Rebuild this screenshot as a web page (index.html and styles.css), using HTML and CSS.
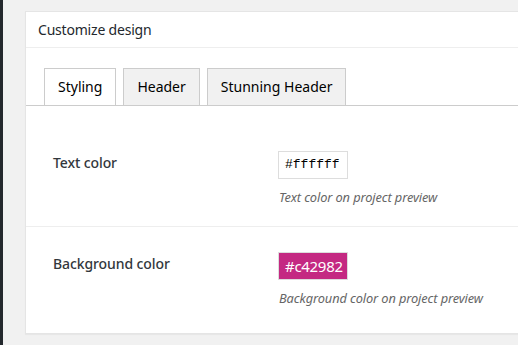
FILE: index.html
```html
<!DOCTYPE html>
<html>
<head>
<meta charset="utf-8">
<link rel="stylesheet" href="styles.css">
</head>
<body>
<div class="sidebar"></div>
<main class="main">
  <section class="card">
    <h2 class="card-title">Customize design</h2>
    <nav class="tabs">
      <span class="tab active">Styling</span>
      <span class="tab">Header</span>
      <span class="tab">Stunning Header</span>
    </nav>
    <div class="form">
      <div class="row">
        <div class="label">Text color</div>
        <div class="field">
          <div class="color-input mono">#ffffff</div>
          <p class="desc">Text color on project preview</p>
        </div>
      </div>
      <div class="row">
        <div class="label">Background color</div>
        <div class="field">
          <div class="color-input filled">#c42982</div>
          <p class="desc">Background color on project preview</p>
        </div>
      </div>
    </div>
  </section>
</main>
</body>
</html>
```
FILE: styles.css
```css
html, body {
  margin: 0;
  padding: 0;
  height: 100%;
  overflow: hidden;
}
body {
  background: #f1f1f1;
  display: flex;
  font-family: "Noto Sans", "Open Sans", sans-serif;
  color: #23282d;
}
.sidebar {
  width: 3px;
  flex: none;
  background: #23282d;
}
.main {
  flex: 1;
  min-width: 0;
  padding: 11px 0 0 22px;
}
.card {
  background: #fff;
  border: 1px solid #e5e5e5;
  border-right: none;
  box-shadow: 0 1px 1px rgba(0,0,0,.04);
}
.card-title {
  margin: 0;
  height: 35px;
  line-height: 35px;
  padding: 0 12px;
  font-size: 14px;
  font-weight: 400;
  letter-spacing: -0.2px;
  border-bottom: 1px solid #eee;
}
.tabs {
  display: flex;
  gap: 7px;
  padding: 20px 0 0 18px;
  border-bottom: 1px solid #ccc;
}
.tab {
  height: 36px;
  line-height: 36px;
  padding: 0 13px;
  font-size: 14px;
  border: 1px solid #ccc;
  border-bottom: none;
  background: #f1f1f1;
  color: #000;
}
.tab.active {
  background: #fff;
}
.form {
  padding: 20px 0 6px;
}
.row {
  display: grid;
  grid-template-columns: 225px 1fr;
  padding: 25px 0 20px 27px;
}
.row + .row {
  border-top: 1px solid #eee;
}
.label {
  font-size: 14px;
  font-weight: 500;
  line-height: 24px;
  color: #32373c;
  letter-spacing: -0.1px;
}
.color-input {
  box-sizing: border-box;
  width: 70px;
  height: 28px;
  line-height: 26px;
  border: 1px solid #ddd;
  padding: 0 6px;
  font-size: 14px;
  color: #000;
}
.color-input.mono {
  font-family: "Liberation Mono", monospace;
  font-size: 13px;
}
.color-input.filled {
  background: #c42982;
  color: #fff;
  font-size: 15px;
  letter-spacing: -0.3px;
}
.desc {
  margin: 9px 0 0 1px;
  font-size: 12.8px;
  line-height: 18px;
  font-style: italic;
  color: #666;
  letter-spacing: -0.1px;
}
```
